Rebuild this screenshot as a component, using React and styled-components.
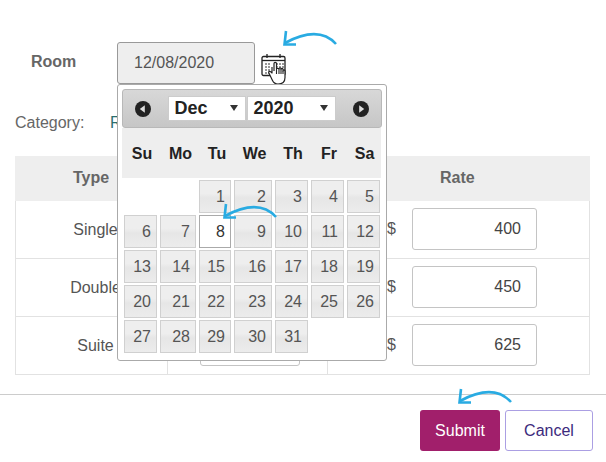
import React from "react";
import styled, { createGlobalStyle } from "styled-components";

const Global = createGlobalStyle`
  html, body { margin: 0; padding: 0; background: #fff; }
  body { font-family: "Liberation Sans", Arial, sans-serif; }
  * { box-sizing: border-box; }
`;

const Page = styled.div`
  position: relative;
  width: 606px;
  height: 462px;
  overflow: hidden;
  background: #fff;
  padding: 42px 0 0 15px;
  color: #555;
  font-size: 16px;
`;

const RoomRow = styled.div`
  display: flex;
  align-items: flex-start;
  height: 42px;
`;

const RoomLabel = styled.label`
  width: 102px;
  padding-left: 16px;
  line-height: 40px;
  font-weight: 700;
  color: #666;
`;

const DateField = styled.div`
  width: 138px;
  height: 42px;
  padding-left: 16px;
  line-height: 40px;
  background: #eee;
  border: 1px solid #999;
  border-radius: 3px;
  color: #555;
`;

const CalendarButton = styled.div`
  margin: 11px 0 0 6px;
  width: 27px;
  height: 33px;
`;

const CategoryRow = styled.div`
  display: flex;
  height: 72px;
  padding-top: 29px;
  line-height: 20px;
  color: #666;
`;

const CategoryLabel = styled.span`
  width: 95px;
`;

const CategoryValue = styled.span`
  color: #2a6f6f;
`;

const Table = styled.div`
  width: 575px;
`;

const HeaderRow = styled.div`
  display: grid;
  grid-template-columns: 152px 160px 263px;
  height: 45px;
  background: #eee;
  line-height: 44px;
  font-weight: 700;
  color: #666;
`;

const HeaderCell = styled.div`
  text-align: ${(p) => p.$align || "center"};
  padding-left: ${(p) => p.$indent || 0}px;
`;

const Row = styled.div`
  display: grid;
  grid-template-columns: 152px 160px 263px;
  height: 58px;
  border: 1px solid #e2e2e2;
  border-top: 0;
`;

const TypeCell = styled.div`
  line-height: 57px;
  text-align: center;
  border-right: 1px solid #e2e2e2;
  padding-left: 8px;
`;

const MiddleCell = styled.div`
  border-right: 1px solid #e2e2e2;
  padding: 7px 0 0 32px;
`;

const RateCell = styled.div`
  display: flex;
  align-items: flex-start;
  padding: 7px 0 0 59px;
`;

const Dollar = styled.span`
  width: 25px;
  line-height: 42px;
`;

const Input = styled.div`
  width: ${(p) => p.$width}px;
  height: 42px;
  padding-right: 15px;
  border: 1px solid #c4c4c4;
  border-radius: 3px;
  background: #fff;
  line-height: 40px;
  text-align: right;
  color: #444;
`;

const Footer = styled.div`
  display: flex;
  justify-content: flex-end;
  gap: 5px;
  margin: 19px 0 0 -15px;
  height: 57px;
  padding: 15px 13px 0 0;
  border-top: 1px solid #ccc;
`;

const SubmitButton = styled.button`
  width: 80px;
  height: 41px;
  border: 0;
  border-radius: 3px;
  background: #a11f6b;
  color: #fff;
  font: 16px "Liberation Sans", Arial, sans-serif;
`;

const CancelButton = styled.button`
  width: 88px;
  height: 41px;
  border: 1px solid #ab9fe3;
  border-radius: 3px;
  background: #fff;
  color: #3c2a7c;
  font: 16px "Liberation Sans", Arial, sans-serif;
`;

const Popup = styled.div`
  position: absolute;
  left: 117px;
  top: 84px;
  width: 270px;
  height: 277px;
  padding: 4px;
  background: #fff;
  border: 1px solid #aaa;
  border-radius: 3px;
`;

const PopupHeader = styled.div`
  display: flex;
  align-items: center;
  height: 39px;
  width: 260px;
  padding: 0 12px 0 12px;
  background: linear-gradient(#d8d8d8, #c6c6c6);
  border: 1px solid #b8b8b8;
  border-radius: 3px;
`;

const NavButton = styled.svg`
  width: 16px;
  height: 16px;
  flex: none;
`;

const Selects = styled.div`
  display: flex;
  gap: 1px;
  margin: 0 auto;
  padding-right: 1px;
`;

const Select = styled.div`
  position: relative;
  width: ${(p) => p.$width}px;
  height: 25px;
  padding-left: 6px;
  background: #fff;
  border: 1px solid #ccc;
  line-height: 23px;
  font-weight: 700;
  font-size: 18px;
  color: #222;
  &::after {
    content: "";
    position: absolute;
    right: 7px;
    top: 8px;
    border: 4px solid transparent;
    border-top: 6px solid #333;
    border-bottom: 0;
  }
`;

const WeekDays = styled.div`
  display: grid;
  grid-template-columns: 38px 39px 34px 41px 36px 36px 35px;
  width: 259px;
  height: 50px;
  background: #eee;
  line-height: 52px;
  padding-left: 1px;
  font-weight: 700;
  color: #222;
  text-align: center;
`;

const Days = styled.div`
  display: grid;
  grid-template-columns: 33px 36px 32px 38px 33px 33px 33px;
  grid-auto-rows: 33px;
  column-gap: 3px;
  row-gap: 2px;
  margin: 2px 0 0 2px;
`;

const Day = styled.div`
  grid-column-start: ${(p) => p.$start || "auto"};
  padding-right: 5px;
  text-align: right;
  line-height: 32px;
  color: ${(p) => (p.$active ? "#333" : "#555")};
  border: 1px solid ${(p) => (p.$active ? "#aaa" : "#d0d0d0")};
  background: ${(p) =>
    p.$active
      ? "#fff"
      : "linear-gradient(#eeeeee 0 40%, #e6e6e6 55%, #ececec 100%)"};
`;

const ArrowSvg = styled.svg`
  position: absolute;
  left: ${(p) => p.$x}px;
  top: ${(p) => p.$y}px;
  width: 60px;
  height: 24px;
  overflow: visible;
`;

const Arrow = ({ x, y }) => (
  <ArrowSvg $x={x} $y={y} viewBox="0 0 60 24" fill="none" stroke="#29abe2" strokeWidth="2.6">
    <path d="M55 16C45 5 30 1 4 15" />
    <path d="M5 3L3.5 16.5L15 16.5" />
  </ArrowSvg>
);

const CalendarIcon = () => (
  <svg width="27" height="33" viewBox="0 0 27 33" fill="none">
    <rect x="1" y="3.5" width="23" height="19" rx="1.5" fill="#fff" stroke="#222" strokeWidth="1.3" />
    <path d="M1 7.5H24" stroke="#222" strokeWidth="1.3" />
    <path d="M6 1V5M19 1V5" stroke="#222" strokeWidth="1.3" />
    <path d="M4 11h2M7 11h2M4 14h2M7 14h2M4 17h2M7 17h2M4 20h2M7 20h2M15 11h2M18 11h2M21 11h2M15 14h2M18 14h2M21 14h2" stroke="#777" strokeWidth="1.6" />
    <path
      d="M11 14V20L9.5 18.6C8.5 17.8 7 18.8 8 20.2L11.5 27.5C12.5 29.5 14 31 17 31C21.5 31 24 29 24 24.5V18C24 16.6 22 16.6 22 18V16.5C22 15 20 15 20 16.5V15.8C20 14.4 18 14.4 18 15.8V15.5H15.5V10.5C15.5 9 13 9 13 10.5V18"
      fill="#fff"
      stroke="#222"
      strokeWidth="1.2"
      strokeLinejoin="round"
    />
    <path d="M15.5 15.5V21M18 15.5V21M20 16.5V21M22 18V21" stroke="#222" strokeWidth="1.1" />
  </svg>
);

const Nav = ({ dir }) => (
  <NavButton viewBox="0 0 16 16">
    <circle cx="8" cy="8" r="8" fill="#222" />
    <path d={dir === "prev" ? "M9.8 4.2V11.8L4.8 8Z" : "M6.2 4.2V11.8L11.2 8Z"} fill="#ddd" />
  </NavButton>
);

const rows = [
  ["Single", "400"],
  ["Double", "450"],
  ["Suite", "625"],
];
const weekDays = ["Su", "Mo", "Tu", "We", "Th", "Fr", "Sa"];
const days = Array.from({ length: 31 }, (_, i) => i + 1);

export default function App() {
  return (
    <Page>
      <Global />
      <RoomRow>
        <RoomLabel>Room</RoomLabel>
        <DateField>12/08/2020</DateField>
        <CalendarButton>
          <CalendarIcon />
        </CalendarButton>
      </RoomRow>
      <CategoryRow>
        <CategoryLabel>Category:</CategoryLabel>
        <CategoryValue>R</CategoryValue>
      </CategoryRow>
      <Table>
        <HeaderRow>
          <HeaderCell>Type</HeaderCell>
          <HeaderCell />
          <HeaderCell $align="left" $indent={113}>Rate</HeaderCell>
        </HeaderRow>
        {rows.map(([type, rate]) => (
          <Row key={type}>
            <TypeCell>{type}</TypeCell>
            <MiddleCell>
              <Input $width={100} />
            </MiddleCell>
            <RateCell>
              <Dollar>$</Dollar>
              <Input $width={125}>{rate}</Input>
            </RateCell>
          </Row>
        ))}
      </Table>
      <Footer>
        <SubmitButton>Submit</SubmitButton>
        <CancelButton>Cancel</CancelButton>
      </Footer>
      <Popup>
        <PopupHeader>
          <Nav dir="prev" />
          <Selects>
            <Select $width={78}>Dec</Select>
            <Select $width={89}>2020</Select>
          </Selects>
          <Nav dir="next" />
        </PopupHeader>
        <WeekDays>
          {weekDays.map((d) => (
            <span key={d}>{d}</span>
          ))}
        </WeekDays>
        <Days>
          {days.map((d) => (
            <Day key={d} $start={d === 1 ? 3 : undefined} $active={d === 8}>
              {d}
            </Day>
          ))}
        </Days>
      </Popup>
      <Arrow x={281} y={28} />
      <Arrow x={221} y={201} />
      <Arrow x={456} y={386} />
    </Page>
  );
}
